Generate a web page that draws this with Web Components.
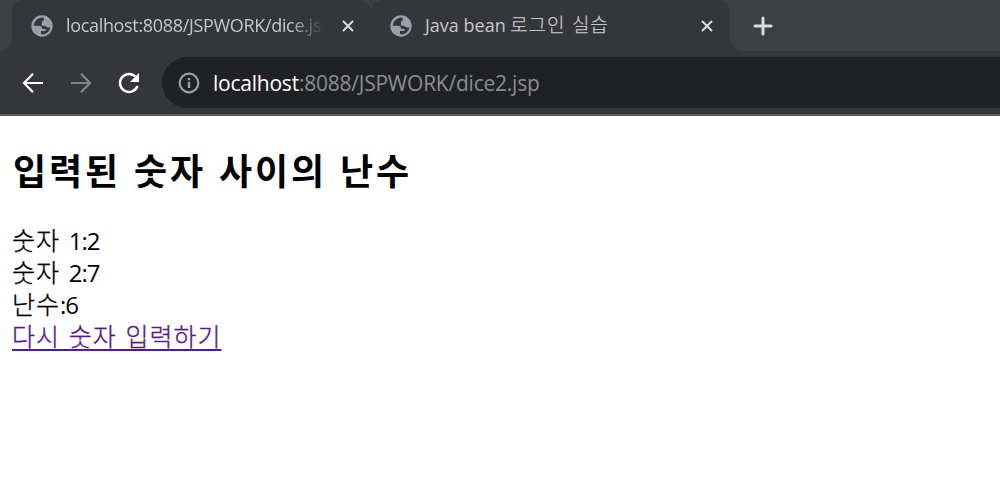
<!DOCTYPE html>
<html lang="ko"><head><meta charset="utf-8"><title>dice2</title>
<style>body{margin:0;background:#fff;overflow:hidden}</style></head><body>
<browser-window></browser-window>
<script>
const define=(name,html)=>customElements.define(name,class extends HTMLElement{constructor(){super();this.attachShadow({mode:'open'}).innerHTML=html;}});
define('globe-icon',`<style>:host{display:block;width:22px;height:22px}svg{display:block}</style>
<svg width="22" height="22" viewBox="0 0 22 22"><circle cx="11" cy="11" r="10.7" fill="#9aa0a6"/><path fill="#35363a" d="M12.5 2.6C8.5 2.6 5 4.4 3.4 7.7L2.6 10.8H7.7C10 10.8 11.3 12.2 11.3 14H14.6V16H10V19.3C14.8 19.6 18.5 17 19.3 12.4H16.6C15.6 12.4 14.8 11.7 14.8 10.7H10.9V7.4C10.9 5.9 12.3 5.5 13 5.5Z"/></svg>`);
define('close-icon',`<style>:host{display:block;width:12px;height:12px}svg{display:block}</style><svg width="12" height="12"><path d="M1 1L11 11M11 1L1 11" stroke="#dadce0" stroke-width="2"/></svg>`);
define('browser-tab',`<style>:host{display:flex;box-sizing:border-box;height:51px;width:359px;padding:0 17px 0 19px;align-items:center;background:#35363a;border-radius:12px 12px 0 0;font:18px "Open Sans","Noto Sans CJK KR",sans-serif;color:#c4c7ca}
.title{flex:1;margin:-2px 18px 0 9px;padding-left:4px;overflow:hidden;white-space:nowrap;line-height:28px;letter-spacing:var(--track,0)}
:host([fade]) .title{-webkit-mask-image:linear-gradient(to right,#000 calc(100% - 34px),transparent)}</style>
<globe-icon></globe-icon><div class="title"><slot></slot></div><close-icon></close-icon>`);
define('tab-strip',`<style>:host{display:flex;height:51px;padding-left:12px;background:#3c4043;align-items:flex-start}
.corner{width:12px;height:51px;margin-left:-12px;background:radial-gradient(circle at 0 0,transparent 11.5px,#35363a 12px) bottom/12px 12px no-repeat}
.right{margin-left:0;transform:scaleX(-1)}
.ko{font-size:19px;letter-spacing:.8px;word-spacing:1px;font-weight:300;-webkit-text-stroke:.25px}
svg{margin:16px 0 0 11px}</style><span class="corner"></span>
<browser-tab fade style="--track:-.33px">localhost:8088/JSPWORK/dice.jsp</browser-tab><browser-tab style="--track:0px">Java bean <span class="ko">로그인 실습</span></browser-tab><span class="corner right"></span>
<svg width="20" height="20"><path d="M10 2V18M2 10H18" stroke="#dadce0" stroke-width="3" stroke-linecap="round"/></svg>`);
define('tool-bar',`<style>:host{display:flex;box-sizing:border-box;height:65px;align-items:center;background:#35363a;border-bottom:2px solid #5b5b5e;padding-left:21px;font:21px "Open Sans",sans-serif}
.icons{display:flex;gap:24px}.address{flex:1;display:flex;align-items:center;height:51px;margin-left:21px;padding-left:16px;background:#202124;border-radius:26px 0 0 26px;color:#8b8e91;white-space:nowrap}
.url{margin:0 0 0 13px;letter-spacing:-.23px;line-height:30px}b{color:#fff;font-weight:400}</style>
<div class="icons"><svg width="24" height="24" fill="none" stroke="#fff" stroke-width="2.2"><path d="M22 12H3.5M12 2.8L3 12L12 21.2"/></svg>
<svg width="24" height="24" fill="none" stroke="#85868a" stroke-width="2.2"><path d="M2 12H20.5M12 2.8L21 12L12 21.2"/></svg>
<svg width="24" height="24"><path d="M19 6.3A9 9 0 1 0 20.5 15" fill="none" stroke="#fff" stroke-width="2.4"/><path d="M22 2V11H13Z" fill="#fff"/></svg></div>
<div class="address"><svg width="22" height="22"><circle cx="11" cy="11" r="9.3" fill="none" stroke="#9aa0a6" stroke-width="2.2"/><path d="M9.8 6H12.2V8.2H9.8ZM9.8 9.8H12.2V16H9.8Z" fill="#9aa0a6"/></svg><div class="url"><b>localhost</b>:8088/JSPWORK/dice2.jsp</div></div>`);
define('dice-result',`<style>:host{display:block;padding:31px 12px 0;color:#000;font-family:"Open Sans","Noto Sans CJK KR",sans-serif}
h2{margin:0 0 0 1px;font:700 36px/44px "Noto Sans CJK KR",sans-serif;letter-spacing:2.9px;white-space:nowrap}
.lines{margin-top:33px;font-size:24px;line-height:32px;letter-spacing:-1px}.lines div{height:32px;white-space:nowrap}
.ko{font-size:25px;letter-spacing:1px;word-spacing:1.2px;font-weight:300;-webkit-text-stroke:.35px}
a{color:#551a8b;text-decoration:underline;text-decoration-thickness:2px;text-underline-offset:3px;text-decoration-skip-ink:none}</style>
<h2>입력된 숫자 사이의 난수</h2><div class="lines"><div><span class="ko">숫자 </span>1:2</div><div><span class="ko">숫자 </span>2:7</div><div><span class="ko">난수</span>:6</div><div><a class="ko" href="#">다시 숫자 입력하기</a></div></div>`);
define('browser-window',`<style>:host{display:block;width:1000px;height:478px;overflow:hidden;background:#fff}</style><tab-strip></tab-strip><tool-bar></tool-bar><dice-result></dice-result>`);
</script></body></html>
